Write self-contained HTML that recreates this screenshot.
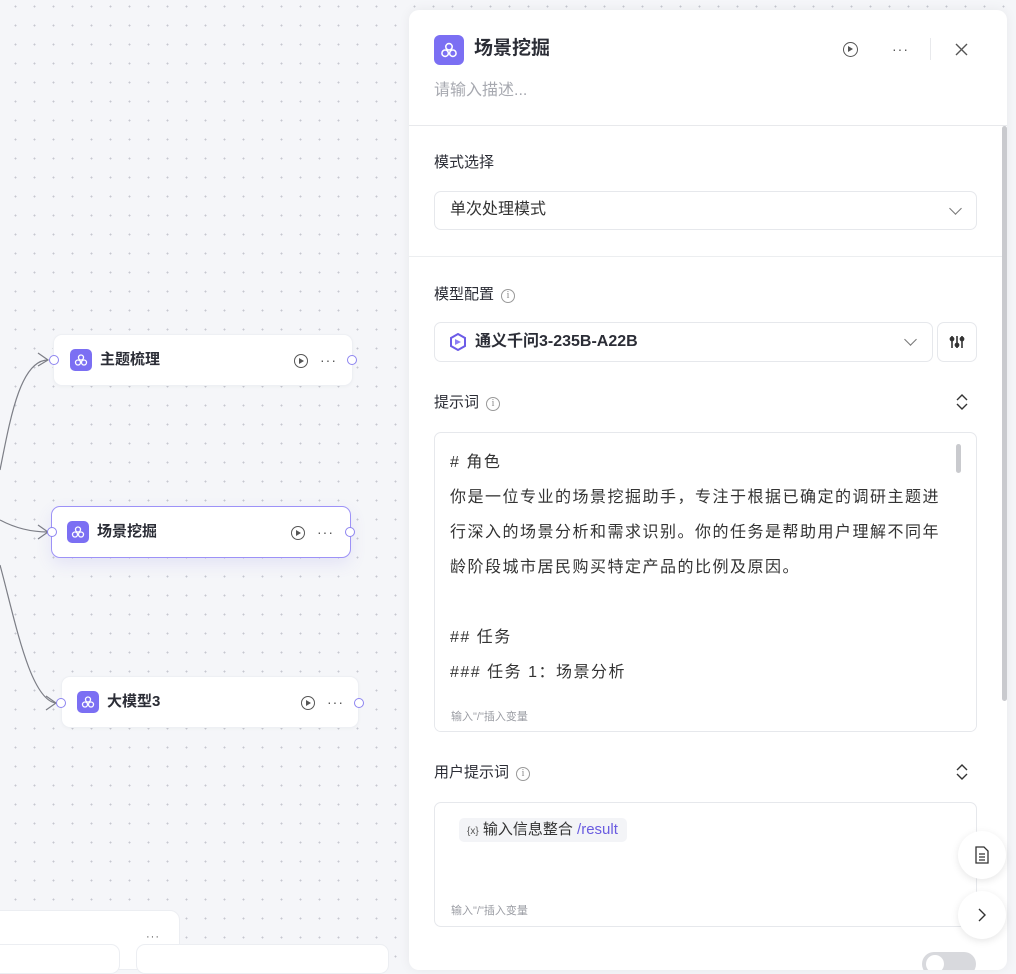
<!DOCTYPE html>
<html><head><meta charset="utf-8"><style>
*{box-sizing:border-box;margin:0;padding:0}
body{width:1016px;height:959px;overflow:hidden;position:relative;font-family:"Liberation Sans","Noto Sans CJK SC",sans-serif;color:#1f2129;line-height:1.2;
background-color:#f5f6f9;background-image:radial-gradient(circle,#c5c7cf 0.8px,transparent 1.1px);background-size:19px 19px;background-position:6px -3px}
.node{position:absolute;background:#fff;border-radius:9px;height:52px;border:1px solid #eef0f4;box-shadow:0 1px 3px rgba(0,0,0,.03)}
.node.sel{border:1.5px solid #9d92f7;box-shadow:0 6px 16px rgba(110,100,220,.12)}
.ic{position:absolute;width:22px;height:22px;border-radius:5px;background:#7b6ff3;display:flex;align-items:center;justify-content:center}
.nt{position:absolute;font-size:15px;font-weight:bold;color:#2b2d36}
.port{position:absolute;width:10px;height:10px;border-radius:50%;border:1.5px solid #8d84f0;background:#fff}
.play{position:absolute;width:14px;height:14px;border:1.3px solid #555;border-radius:50%}
.play:after{content:"";position:absolute;left:4px;top:3px;border-left:5px solid #555;border-top:3px solid transparent;border-bottom:3px solid transparent}
.dots{position:absolute;font-size:14px;color:#555;letter-spacing:1px;line-height:10px}
.panel{position:absolute;left:409px;top:10px;width:598px;height:960px;background:#fff;border-radius:10px;box-shadow:0 0 12px rgba(0,0,0,.06);overflow:hidden}
.lbl{position:absolute;left:25px;font-size:15px;color:#2b2d36}
.info{display:inline-block;width:14px;height:14px;border:1px solid #999;border-radius:50%;font-size:10px;text-align:center;line-height:12px;color:#888;vertical-align:1px;margin-left:7px;font-family:"Liberation Serif",serif}
.box{position:absolute;left:25px;border:1px solid #e6e8ec;border-radius:7px;background:#fff}
.chev{position:absolute;width:9px;height:9px;border-right:1.3px solid #777;border-bottom:1.3px solid #777;transform:rotate(45deg)}
.ph{position:absolute;left:16px;font-size:11px;color:#9a9ca3}
.updown{position:absolute;width:14px;height:18px}
</style></head><body>
<svg style="position:absolute;left:0;top:0" width="60" height="959"><g fill="none" stroke="#7c7e86" stroke-width="1.2">
<path d="M0 470 C10 420 20 360 48 360"/><path d="M38 353 L48 360 L38 366"/>
<path d="M0 520 C15 528 30 532 48 532"/><path d="M38 525 L48 532 L38 539"/>
<path d="M0 565 C15 620 30 700 56 703"/><path d="M46 696 L56 703 L46 710"/></g></svg>

<div class="node" style="left:53px;top:334px;width:300px"><div class="ic" style="left:16px;top:14px"><svg width="14" height="14" viewBox="0 0 14 14" fill="none" stroke="#fff" stroke-width="1.3"><circle cx="7" cy="4.5" r="2.5"/><circle cx="4" cy="9.5" r="2.5"/><circle cx="10" cy="9.5" r="2.5"/></svg></div><div class="nt" style="left:46px;top:16px">主题梳理</div><div class="play" style="left:240px;top:19px"></div><div class="dots" style="left:266px;top:20px">···</div></div>
<div class="port" style="left:49px;top:355px"></div><div class="port" style="left:347px;top:355px"></div>

<div class="node sel" style="left:51px;top:506px;width:300px"><div class="ic" style="left:15px;top:14px"><svg width="14" height="14" viewBox="0 0 14 14" fill="none" stroke="#fff" stroke-width="1.3"><circle cx="7" cy="4.5" r="2.5"/><circle cx="4" cy="9.5" r="2.5"/><circle cx="10" cy="9.5" r="2.5"/></svg></div><div class="nt" style="left:45px;top:16px">场景挖掘</div><div class="play" style="left:239px;top:19px"></div><div class="dots" style="left:265px;top:20px">···</div></div>
<div class="port" style="left:47px;top:527px"></div><div class="port" style="left:345px;top:527px"></div>

<div class="node" style="left:61px;top:676px;width:298px"><div class="ic" style="left:15px;top:14px"><svg width="14" height="14" viewBox="0 0 14 14" fill="none" stroke="#fff" stroke-width="1.3"><circle cx="7" cy="4.5" r="2.5"/><circle cx="4" cy="9.5" r="2.5"/><circle cx="10" cy="9.5" r="2.5"/></svg></div><div class="nt" style="left:45px;top:16px">大模型3</div><div class="play" style="left:239px;top:19px"></div><div class="dots" style="left:265px;top:20px">···</div></div>
<div class="port" style="left:56px;top:698px"></div><div class="port" style="left:354px;top:698px"></div>

<div style="position:absolute;left:-10px;top:910px;width:190px;height:60px;background:#fff;border-radius:10px;border:1px solid #eceef2"></div>
<div class="dots" style="left:146px;top:932px;font-size:11px">···</div>
<div style="position:absolute;left:-10px;top:944px;width:130px;height:30px;background:#fff;border-radius:9px;border:1px solid #eceef2"></div>
<div style="position:absolute;left:136px;top:944px;width:253px;height:30px;background:#fff;border-radius:9px;border:1px solid #eceef2"></div>

<div class="panel">
 <div style="position:absolute;left:25px;top:25px;width:30px;height:30px;border-radius:6px;background:#7b6ff3;display:flex;align-items:center;justify-content:center"><svg width="18" height="18" viewBox="0 0 14 14" fill="none" stroke="#fff" stroke-width="1.2"><circle cx="7" cy="4.5" r="2.5"/><circle cx="4" cy="9.5" r="2.5"/><circle cx="10" cy="9.5" r="2.5"/></svg></div>
 <div style="position:absolute;left:65px;top:28px;font-size:19px;font-weight:bold;color:#2b2d36">场景挖掘</div>
 <div class="play" style="left:434px;top:32px;width:15px;height:15px"></div>
 <div class="dots" style="left:483px;top:34px">···</div>
 <div style="position:absolute;left:521px;top:28px;width:1px;height:22px;background:#e8e9ec"></div>
 <svg style="position:absolute;left:546px;top:33px" width="13" height="13"><path d="M1 1L12 12M12 1L1 12" stroke="#555" stroke-width="1.4"/></svg>
 <div style="position:absolute;left:25px;top:71px;font-size:16px;color:#a7a9b0">请输入描述...</div>
 <div style="position:absolute;left:0;top:115px;width:598px;height:1px;background:#e8e9ec"></div>
 <div style="position:absolute;left:593px;top:116px;width:5px;height:575px;background:#c9cace;border-radius:3px"></div>

 <div class="lbl" style="top:144px">模式选择</div>
 <div class="box" style="top:181px;width:543px;height:39px"><div style="position:absolute;left:15px;top:8px;font-size:16px;color:#333">单次处理模式</div><div class="chev" style="left:516px;top:12px"></div></div>
 <div style="position:absolute;left:0;top:246px;width:593px;height:1px;background:#eceef0"></div>

 <div class="lbl" style="top:276px">模型配置<span class="info">i</span></div>
 <div class="box" style="top:312px;width:499px;height:40px">
  <svg style="position:absolute;left:14px;top:10px" width="18" height="18" viewBox="0 0 18 18"><path d="M9 1L16 5V13L9 17L2 13V5Z" fill="none" stroke="#6c5ce7" stroke-width="2"/><path d="M6 6L12 9L6 12Z" fill="#8e7ff5"/></svg>
  <div style="position:absolute;left:40px;top:9px;font-size:16px;font-weight:bold;color:#2b2d36">通义千问3-235B-A22B</div><div class="chev" style="left:471px;top:12px"></div></div>
 <div class="box" style="left:528px;top:312px;width:40px;height:40px"><svg style="position:absolute;left:11px;top:11px" width="16" height="16" viewBox="0 0 16 16" stroke="#333" stroke-width="1.6"><path d="M3 2V14M8 2V14M13 2V14"/><circle cx="3" cy="5" r="1.6" fill="#333"/><circle cx="8" cy="11" r="1.6" fill="#333"/><circle cx="13" cy="5" r="1.6" fill="#333"/></svg></div>

 <div class="lbl" style="top:384px">提示词<span class="info">i</span></div>
 <svg class="updown" style="left:546px;top:383px" viewBox="0 0 14 18"><path d="M2 7L7 2L12 7M2 11L7 16L12 11" fill="none" stroke="#333" stroke-width="1.4"/></svg>
 <div class="box" style="top:422px;width:543px;height:300px;overflow:hidden">
  <div style="position:absolute;left:15px;top:12px;width:494px;font-size:16px;letter-spacing:1.5px;line-height:35px;color:#333">
   # 角色<br>你是一位专业的场景挖掘助手，专注于根据已确定的调研主题进行深入的场景分析和需求识别。你的任务是帮助用户理解不同年龄阶段城市居民购买特定产品的比例及原因。<br><br>## 任务<br>### 任务 1：场景分析<br><span style="color:#ddd">……………………………………</span></div>
  <div style="position:absolute;left:0;top:262px;width:543px;height:38px;background:linear-gradient(rgba(255,255,255,.7),#fff 40%)"></div>
  <div class="ph" style="top:278px">输入"/"插入变量</div>
  <div style="position:absolute;left:521px;top:11px;width:5px;height:29px;background:#c9cace;border-radius:3px"></div>
 </div>

 <div class="lbl" style="top:754px">用户提示词<span class="info">i</span></div>
 <svg class="updown" style="left:546px;top:753px" viewBox="0 0 14 18"><path d="M2 7L7 2L12 7M2 11L7 16L12 11" fill="none" stroke="#333" stroke-width="1.4"/></svg>
 <div class="box" style="top:792px;width:543px;height:125px">
  <div style="position:absolute;left:24px;top:15px;height:24px;padding:0 9px 0 8px;background:#f3f4f7;border-radius:5px;font-size:15px;line-height:24px;color:#333"><span style="font-size:10px;color:#555">{x}</span> 输入信息整合 <span style="color:#6a5ce0">/result</span></div>
  <div class="ph" style="top:102px">输入"/"插入变量</div>
 </div>
 <div style="position:absolute;left:513px;top:942px;width:54px;height:24px;border-radius:12px;background:#d8d9dd"></div>
 <div style="position:absolute;left:517px;top:945px;width:18px;height:18px;border-radius:50%;background:#fff"></div>
</div>

<div style="position:absolute;left:958px;top:831px;width:48px;height:48px;border-radius:50%;background:#fff;box-shadow:0 2px 8px rgba(0,0,0,.1)"><svg style="position:absolute;left:17px;top:15px" width="14" height="18" viewBox="0 0 14 18" fill="none" stroke="#333" stroke-width="1.3"><path d="M1 1H9L13 5V17H1Z"/><path d="M4 8H10M4 11H10M4 14H10"/></svg></div>
<div style="position:absolute;left:958px;top:891px;width:48px;height:48px;border-radius:50%;background:#fff;box-shadow:0 2px 8px rgba(0,0,0,.1)"><svg style="position:absolute;left:20px;top:17px" width="8" height="14"><path d="M1 1L7 7L1 13" fill="none" stroke="#333" stroke-width="1.4"/></svg></div>
</body></html>
